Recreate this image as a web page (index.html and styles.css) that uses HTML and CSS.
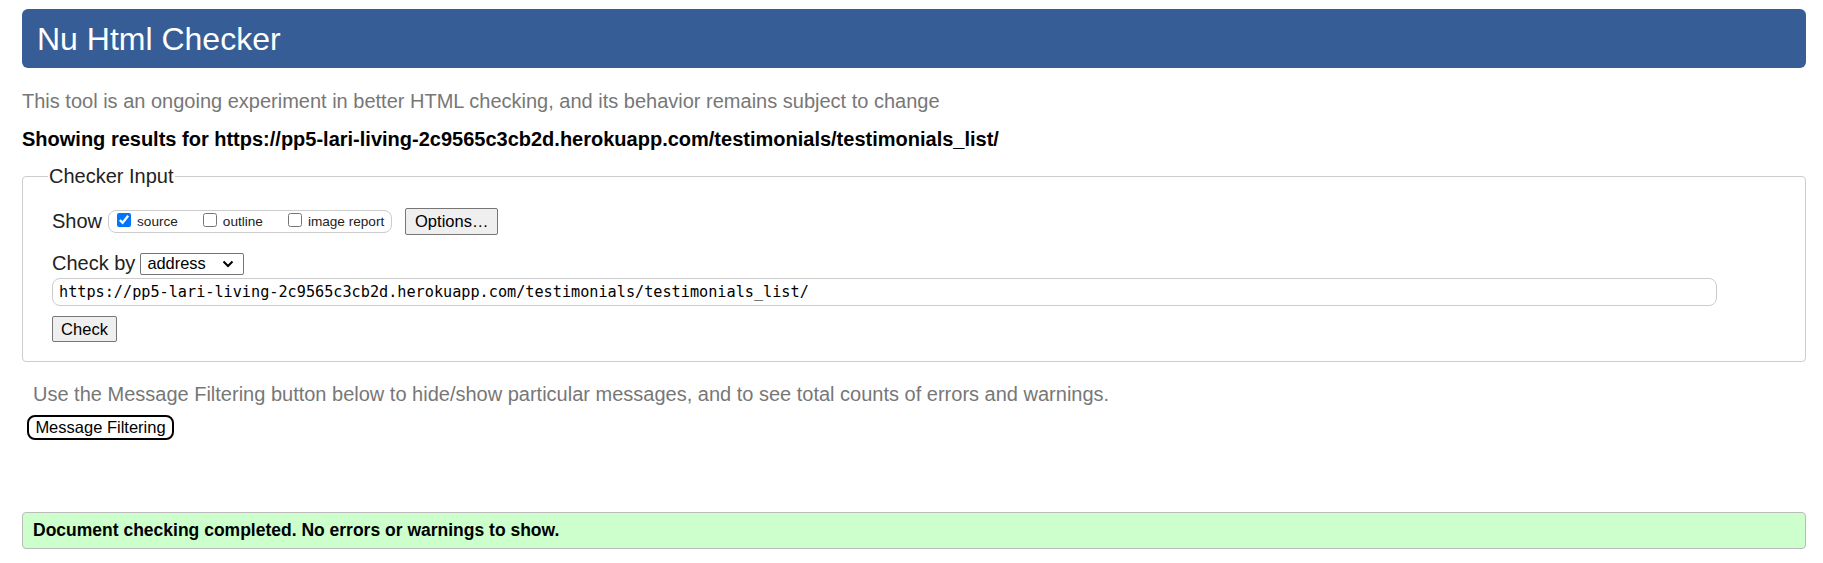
FILE: index.html
```html
<!DOCTYPE html>
<html lang="en">
<head>
<meta charset="utf-8">
<title>Nu Html Checker</title>
<link rel="stylesheet" href="styles.css">
</head>
<body>
<h1 class="banner">Nu Html Checker</h1>
<p class="intro">This tool is an ongoing experiment in better HTML checking, and its behavior remains subject to change</p>
<p class="results">Showing results for https://pp5-lari-living-2c9565c3cb2d.herokuapp.com/testimonials/testimonials_list/</p>
<fieldset class="input-box">
  <legend class="legend">Checker Input</legend>
  <div class="row show-row">
    <span class="label">Show</span>
    <span class="checks">
      <label class="check"><input type="checkbox" checked><span>source</span></label>
      <label class="check"><input type="checkbox"><span>outline</span></label>
      <label class="check"><input type="checkbox"><span>image report</span></label>
    </span>
    <button class="btn options">Options…</button>
  </div>
  <div class="row by-row">
    <span class="label">Check by</span>
    <span class="select">address<svg class="chev" width="12" height="8" viewBox="0 0 12 8"><path d="M1.5 1.5 L6 6 L10.5 1.5" fill="none" stroke="#000" stroke-width="2"/></svg></span>
  </div>
  <div class="url">https://pp5-lari-living-2c9565c3cb2d.herokuapp.com/testimonials/testimonials_list/</div>
  <button class="btn check-btn">Check</button>
</fieldset>
<p class="filter-note">Use the Message Filtering button below to hide/show particular messages, and to see total counts of errors and warnings.</p>
<button class="filter-btn">Message Filtering</button>
<div class="success">Document checking completed. No errors or warnings to show.</div>
</body>
</html>
```

FILE: styles.css
```css
html, body {
  margin: 0;
  background: #fff;
}
body {
  padding: 9px 17px 0 22px;
  font-family: "Liberation Sans", Arial, sans-serif;
  color: #000;
}
.banner {
  margin: 0;
  height: 59px;
  line-height: 61px;
  padding: 0 15px;
  background: #365d95;
  color: #fff;
  font-weight: normal;
  font-size: 32px;
  border-radius: 6px;
}
.intro {
  margin: 22px 0 0 0;
  color: #777;
  font-size: 20px;
  line-height: 23px;
}
.results {
  margin: 15px 0 0 0;
  font-weight: bold;
  font-size: 20px;
  line-height: 23px;
}
.input-box {
  margin: 14px 0 0 0;
  padding: 20px 20px 19px 29px;
  border: 1px solid #ccc;
  border-radius: 4px;
  min-width: 0;
}
.legend {
  margin-left: -4px;
  padding: 0 1px;
  font-size: 20px;
  line-height: 23px;
  color: #222;
}
.row {
  display: flex;
  align-items: center;
}
.label {
  font-size: 20px;
  color: #222;
}
.show-row {
  height: 27px;
}
.checks {
  display: flex;
  align-items: center;
  margin-left: 6px;
  height: 23px;
  box-sizing: border-box;
  padding: 0 7px 0 8px;
  border: 1px solid #ccc;
  border-radius: 8px;
  gap: 25px;
}
.check {
  display: flex;
  align-items: center;
  font-size: 13.6px;
  color: #222;
}
.check input {
  margin: 0 6px 3px 0;
  width: 14px;
  height: 14px;
}
.btn {
  font-family: "Liberation Sans", Arial, sans-serif;
  font-size: 16.5px;
  color: #000;
  background: #efefef;
  border: 1px solid #767676;
  border-radius: 2px;
  padding: 0 6px;
  height: 27px;
}
.options {
  margin-left: 13px;
  width: 93px;
}
.by-row {
  margin-top: 17px;
}
.select {
  display: inline-flex;
  align-items: center;
  justify-content: space-between;
  margin-left: 5px;
  width: 104px;
  height: 22px;
  box-sizing: border-box;
  padding: 0 9px 0 6px;
  border: 1px solid #767676;
  border-radius: 2px;
  font-size: 16.4px;
  color: #000;
}
.url {
  margin-top: 3px;
  width: 1665px;
  height: 28px;
  box-sizing: border-box;
  padding: 0 6px;
  border: 1px solid #ccc;
  border-radius: 8px;
  font-family: "DejaVu Sans Mono", "Liberation Mono", monospace;
  font-size: 15.2px;
  line-height: 26px;
  color: #000;
  white-space: nowrap;
}
.check-btn {
  margin-top: 10px;
  width: 65px;
  height: 26px;
  display: block;
}
.filter-note {
  margin: 21px 0 0 11px;
  color: #777;
  font-size: 20px;
  line-height: 23px;
}
.filter-btn {
  display: block;
  margin: 9px 0 0 5px;
  height: 25px;
  width: 147px;
  padding: 0;
  font-family: "Liberation Sans", Arial, sans-serif;
  font-size: 16.5px;
  color: #000;
  background: #fff;
  border: 2px solid #000;
  border-radius: 8px;
}
.success {
  margin-top: 72px;
  height: 37px;
  box-sizing: border-box;
  padding: 0 10px;
  line-height: 35px;
  background: #ccffcc;
  border: 1px solid #bbb;
  border-radius: 4px;
  font-weight: bold;
  font-size: 17.5px;
}
```
